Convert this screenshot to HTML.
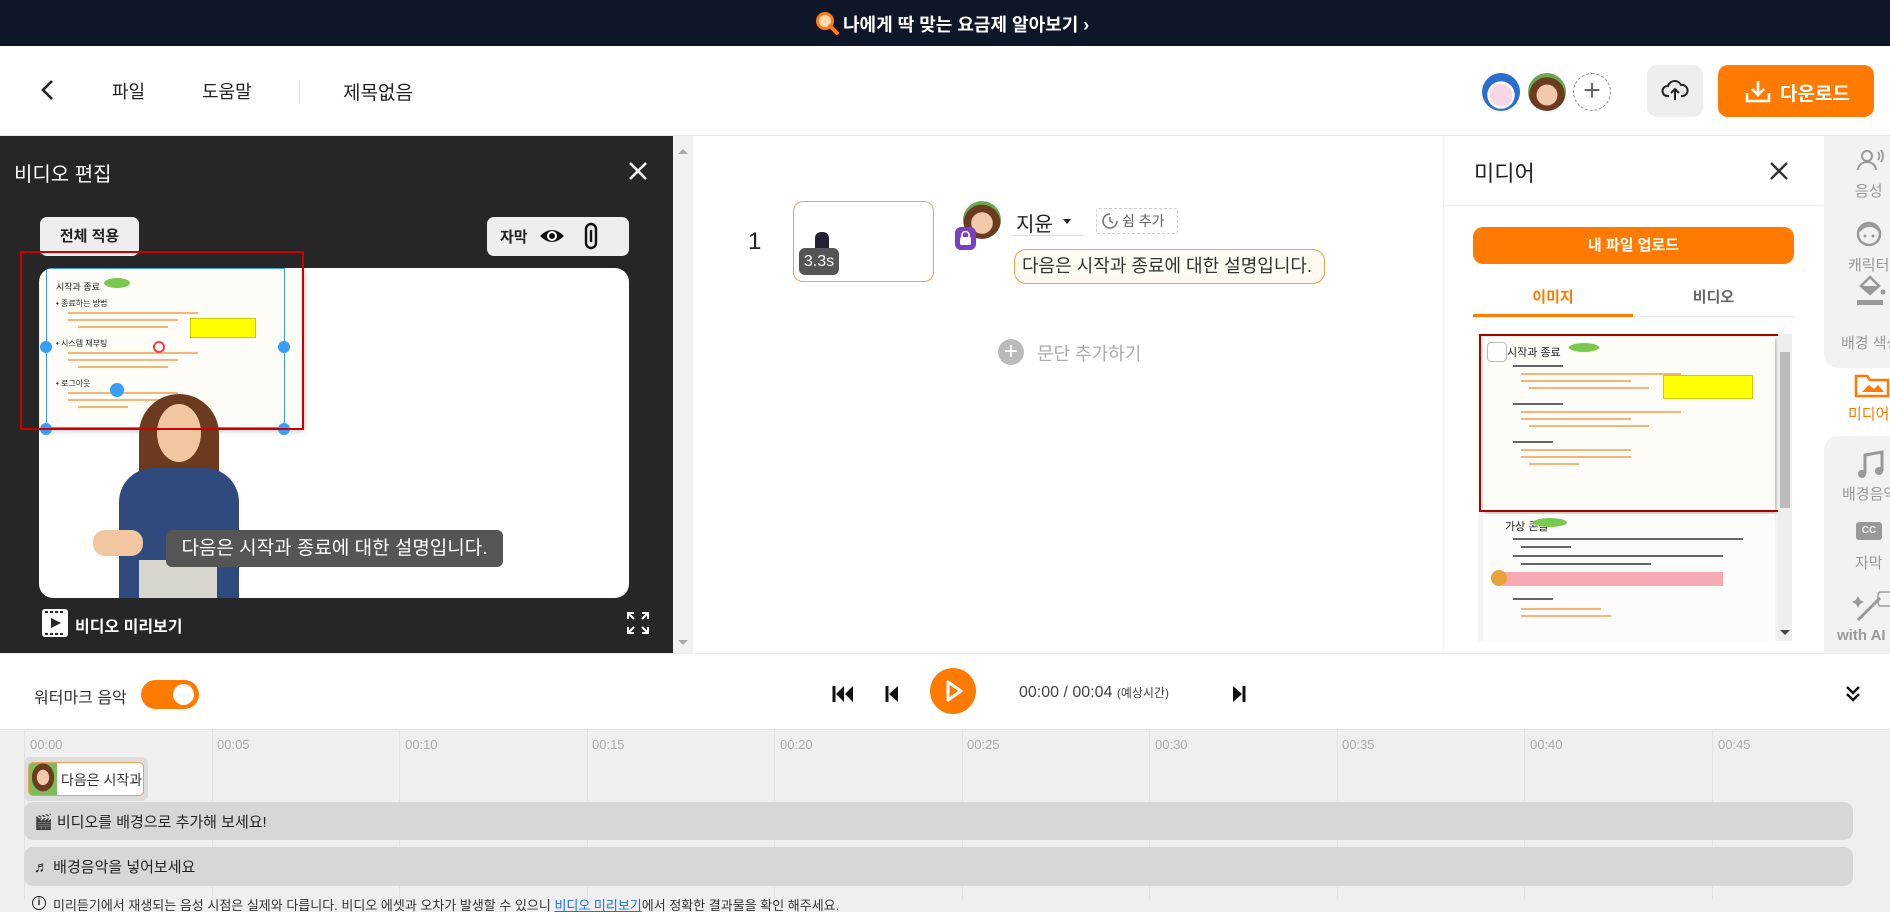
<!DOCTYPE html>
<html><head><meta charset="utf-8"><style>
*{box-sizing:border-box;margin:0;padding:0}
body{width:1890px;height:912px;position:relative;overflow:hidden;background:#fff;font-family:"Liberation Sans","Noto Sans CJK KR",sans-serif;color:#222}
.a{position:absolute}
.t{white-space:nowrap}
.ln{position:absolute;height:2px;background:#f3a25a;opacity:.8}
.lk{position:absolute;height:2px;background:#666}
</style></head><body>
<!-- banner -->
<div class="a" style="left:0;top:0;width:1890px;height:46px;background:#0e1628"></div>
<svg class="a" style="left:815px;top:11px" width="24" height="24"><circle cx="10" cy="10" r="7.5" fill="#ffd9b0" stroke="#ff7a1a" stroke-width="3"/><path d="M15 15 L22 22" stroke="#ff7a1a" stroke-width="4" stroke-linecap="round"/></svg>
<div class="a t" style="left:843px;top:11px;color:#fff;font-size:18px;font-weight:bold">나에게 딱 맞는 요금제 알아보기 ›</div>
<!-- header -->
<div class="a" style="left:0;top:135px;width:1890px;height:1px;background:#e6e6e6"></div>
<svg class="a" style="left:40px;top:79px" width="16" height="22"><path d="M12 2 L3 11 L12 20" stroke="#222" stroke-width="2.6" fill="none"/></svg>
<div class="a t" style="left:112px;top:78px;font-size:18px">파일</div>
<div class="a t" style="left:202px;top:78px;font-size:18px">도움말</div>
<div class="a" style="left:299px;top:80px;width:1px;height:24px;background:#ddd"></div>
<div class="a t" style="left:343px;top:78px;font-size:19px">제목없음</div>
<div class="a" style="left:1482px;top:73px;width:38px;height:38px;border-radius:50%;background:radial-gradient(circle at 50% 58%,#f7d6e6 0 38%,#ffffff 40% 46%,#2a6fd0 48%)"></div>
<div class="a" style="left:1528px;top:73px;width:38px;height:38px;border-radius:50%;background:radial-gradient(circle at 50% 58%,#f2c9a8 0 35%,#6b3b20 37% 60%,#6aa84f 62%)"></div>
<div class="a" style="left:1573px;top:73px;width:38px;height:38px;border-radius:50%;border:1px dashed #888;text-align:center;line-height:34px;font-size:30px;color:#666">+</div>
<div class="a" style="left:1647px;top:65px;width:56px;height:52px;border-radius:10px;background:#eee"></div>
<svg class="a" style="left:1661px;top:76px" width="28" height="28"><path d="M8 20 H6 A5 5 0 0 1 7 10 A7 7 0 0 1 20 9 A5 5 0 0 1 22 20 H20" stroke="#222" stroke-width="2" fill="none"/><path d="M14 24 V13 M10 17 L14 13 L18 17" stroke="#222" stroke-width="2" fill="none"/></svg>
<div class="a" style="left:1718px;top:65px;width:156px;height:52px;border-radius:10px;background:#ff7a00"></div>
<svg class="a" style="left:1744px;top:78px" width="28" height="26"><path d="M3 15 V23 H25 V15 M14 3 V17 M8 11 L14 17 L20 11" stroke="#fff" stroke-width="2.6" fill="none"/></svg>
<div class="a t" style="left:1780px;top:79px;font-size:19px;font-weight:bold;color:#fff">다운로드</div>
<!-- left panel -->
<div class="a" style="left:0;top:136px;width:673px;height:517px;background:#262626"></div>
<div class="a t" style="left:14px;top:158px;font-size:20px;color:#fff">비디오 편집</div>
<svg class="a" style="left:628px;top:161px" width="20" height="20"><path d="M2 2 L18 18 M18 2 L2 18" stroke="#fff" stroke-width="2.6"/></svg>
<div class="a t" style="left:40px;top:217px;width:99px;height:39px;border-radius:7px;background:#eee;text-align:center;line-height:39px;font-size:15px;font-weight:bold">전체 적용</div>
<div class="a" style="left:487px;top:217px;width:142px;height:39px;border-radius:7px;background:#eee"></div>
<div class="a t" style="left:500px;top:226px;font-size:15px;font-weight:bold">자막</div>
<svg class="a" style="left:538px;top:226px" width="28" height="20"><path d="M2 10 Q14 -2 26 10 Q14 22 2 10Z" fill="#111"/><circle cx="14" cy="10" r="5" fill="#fff"/><circle cx="14" cy="10" r="3" fill="#111"/></svg>
<svg class="a" style="left:584px;top:222px" width="14" height="28"><rect x="2" y="2" width="10" height="24" rx="5" stroke="#111" stroke-width="2.4" fill="none"/><path d="M7 8 V20" stroke="#111" stroke-width="2.4"/></svg>
<div class="a" style="left:39px;top:268px;width:590px;height:330px;border-radius:14px;background:#fff;overflow:hidden">
 <div class="a" style="left:1px;top:0;width:262px;height:160px;background:#fdfcf6;box-shadow:2px 2px 6px rgba(0,0,0,.3)">
  <div class="a t" style="left:16px;top:12px;font-size:9px">시작과 종료</div>
  <div class="a" style="left:64px;top:10px;width:26px;height:10px;border-radius:50%;background:#79c94e"></div>
  <div class="a t" style="left:16px;top:30px;font-size:8px">• 종료하는 방법</div>
  <div class="ln" style="left:28px;top:44px;width:130px"></div><div class="ln" style="left:28px;top:51px;width:110px"></div><div class="ln" style="left:38px;top:58px;width:90px"></div>
  <div class="a" style="left:150px;top:50px;width:66px;height:20px;background:#ffff00;border:1px solid #cc0"></div>
  <div class="a t" style="left:16px;top:70px;font-size:8px">• 시스템 재부팅</div>
  <div class="ln" style="left:28px;top:84px;width:130px"></div><div class="ln" style="left:28px;top:91px;width:110px"></div><div class="ln" style="left:38px;top:98px;width:90px"></div>
  <div class="a t" style="left:16px;top:110px;font-size:8px">• 로그아웃</div>
  <div class="ln" style="left:28px;top:124px;width:110px"></div><div class="ln" style="left:28px;top:131px;width:100px"></div><div class="ln" style="left:38px;top:138px;width:50px"></div>
 </div>
 <div class="a" style="left:7px;top:0;width:239px;height:160px;border:1px solid #3a9df5"></div>
 <div class="a" style="left:1px;top:155px;width:12px;height:12px;border-radius:50%;background:#3a9df5"></div>
 <div class="a" style="left:239px;top:155px;width:12px;height:12px;border-radius:50%;background:#3a9df5"></div>
 <div class="a" style="left:239px;top:73px;width:12px;height:12px;border-radius:50%;background:#3a9df5"></div>
 <div class="a" style="left:1px;top:73px;width:12px;height:12px;border-radius:50%;background:#3a9df5"></div>
 <div class="a" style="left:114px;top:73px;width:12px;height:12px;border-radius:50%;border:2px solid #e44"></div>
 <!-- character -->
 <div class="a" style="left:100px;top:126px;width:80px;height:130px;border-radius:40px 40px 12px 12px;background:#6b3a1f"></div>
 <div class="a" style="left:118px;top:136px;width:44px;height:58px;border-radius:50%;background:#f2c6a0"></div>
 <div class="a" style="left:80px;top:200px;width:120px;height:130px;border-radius:34px 34px 0 0;background:#2f4b7e"></div>
 <div class="a" style="left:54px;top:262px;width:50px;height:26px;border-radius:12px;background:#f2c6a0"></div>
 <div class="a" style="left:100px;top:292px;width:78px;height:40px;background:#d9d6cf"></div>
</div>
<div class="a" style="left:20px;top:251px;width:284px;height:179px;border:2px solid #c00"></div>
<div class="a" style="left:110px;top:383px;width:14px;height:14px;border-radius:50%;background:#3a9df5"></div>
<div class="a t" style="left:166px;top:530px;width:337px;height:37px;border-radius:6px;background:#555;color:#fff;font-size:19px;line-height:37px;text-align:center">다음은 시작과 종료에 대한 설명입니다.</div>
<svg class="a" style="left:42px;top:609px" width="26" height="28"><rect x="0" y="0" width="26" height="28" rx="3" fill="#fff"/><path d="M3 3 H23 M3 25 H23" stroke="#262626" stroke-width="2" stroke-dasharray="3 2"/><path d="M9 9 L19 14 L9 19Z" fill="#262626"/></svg>
<div class="a t" style="left:75px;top:613px;font-size:16px;font-weight:bold;color:#fff">비디오 미리보기</div>
<svg class="a" style="left:626px;top:611px" width="24" height="24"><path d="M2 8 V2 H8 M2 2 L8 8 M22 8 V2 H16 M22 2 L16 8 M2 16 V22 H8 M2 22 L8 16 M22 16 V22 H16 M22 22 L16 16" stroke="#fff" stroke-width="2" fill="none"/></svg>
<!-- scrollbar column -->
<div class="a" style="left:673px;top:136px;width:20px;height:517px;background:#f1f1f1"></div>
<div class="a" style="left:678px;top:144px;width:0;height:0;border:5px solid transparent;border-bottom-color:#aaa"></div>
<div class="a" style="left:678px;top:640px;width:0;height:0;border:5px solid transparent;border-top-color:#aaa"></div>
<!-- middle -->
<div class="a t" style="left:748px;top:228px;font-size:24px">1</div>
<div class="a" style="left:793px;top:201px;width:141px;height:81px;border:1.5px solid #f0a050;border-radius:10px;background:#fff"></div>
<div class="a" style="left:815px;top:232px;width:14px;height:40px;background:#223;border-radius:6px 6px 0 0"></div>
<div class="a t" style="left:799px;top:248px;width:40px;height:27px;border-radius:6px;background:#555;color:#fff;font-size:16px;line-height:27px;text-align:center">3.3s</div>
<div class="a" style="left:963px;top:201px;width:38px;height:38px;border-radius:50%;background:radial-gradient(circle at 50% 58%,#f2c9a8 0 36%,#6b3b20 38% 62%,#6aa84f 64%)"></div>
<div class="a" style="left:955px;top:227px;width:21px;height:23px;border-radius:6px;background:#7b3fc4"></div>
<svg class="a" style="left:959px;top:230px" width="13" height="16"><path d="M3 7 V5 A3.5 3.5 0 0 1 10 5 V7" stroke="#fff" stroke-width="1.6" fill="none"/><rect x="1" y="7" width="11" height="8" rx="1.5" fill="#fff"/></svg>
<div class="a t" style="left:1016px;top:208px;font-size:20px">지윤</div>
<div class="a" style="left:1063px;top:219px;border:4px solid transparent;border-top:5px solid #222"></div>
<div class="a" style="left:1013px;top:235px;width:70px;height:1px;background:#ddd"></div>
<div class="a" style="left:1096px;top:208px;width:82px;height:26px;border:1px dashed #ccc;border-radius:3px"></div>
<svg class="a" style="left:1101px;top:212px" width="18" height="18"><path d="M9 2 A7 7 0 1 0 16 9" stroke="#777" stroke-width="1.6" fill="none"/><path d="M9 5 V9 L12 11" stroke="#777" stroke-width="1.5" fill="none"/></svg>
<div class="a t" style="left:1122px;top:211px;font-size:14px;color:#666">쉼 추가</div>
<div class="a t" style="left:1014px;top:249px;width:311px;height:35px;border:1.5px solid #f0a050;border-radius:12px;background:#fffaf2;font-size:18px;line-height:32px;padding-left:7px;color:#333">다음은 시작과 종료에 대한 설명입니다.</div>
<div class="a" style="left:998px;top:339px;width:26px;height:26px;border-radius:50%;background:#bbb;color:#fff;text-align:center;line-height:25px;font-size:24px">+</div>
<div class="a t" style="left:1037px;top:340px;font-size:18px;color:#aaa">문단 추가하기</div>
<!-- media panel -->
<div class="a" style="left:1443px;top:136px;width:1px;height:517px;background:#eee"></div>
<div class="a t" style="left:1474px;top:156px;font-size:22px">미디어</div>
<svg class="a" style="left:1769px;top:161px" width="20" height="20"><path d="M2 2 L18 18 M18 2 L2 18" stroke="#333" stroke-width="2.4"/></svg>
<div class="a" style="left:1444px;top:205px;width:379px;height:1px;background:#eee"></div>
<div class="a t" style="left:1473px;top:227px;width:321px;height:37px;border-radius:10px;background:#ff7a00;color:#fff;font-weight:bold;font-size:15px;text-align:center;line-height:37px">내 파일 업로드</div>
<div class="a t" style="left:1473px;top:286px;width:160px;text-align:center;font-size:15px;font-weight:bold;color:#ff7a00">이미지</div>
<div class="a t" style="left:1633px;top:286px;width:161px;text-align:center;font-size:15px;font-weight:bold;color:#666">비디오</div>
<div class="a" style="left:1473px;top:316px;width:321px;height:1px;background:#e8e8e8"></div>
<div class="a" style="left:1473px;top:314px;width:160px;height:3px;background:#ff7a00"></div>
<div class="a" style="left:1478px;top:334px;width:314px;height:307px;background:#f4f4f4"></div>
<div class="a" style="left:1483px;top:337px;width:292px;height:174px;background:#fdfcf6;box-shadow:1px 2px 4px rgba(0,0,0,.3)">
 <div class="a" style="left:4px;top:5px;width:20px;height:20px;border:1px solid #bbb;border-radius:4px;background:#fff"></div>
 <div class="a t" style="left:24px;top:7px;font-size:11px">시작과 종료</div>
 <div class="a" style="left:86px;top:6px;width:30px;height:9px;border-radius:50%;background:#79c94e"></div>
 <div class="lk" style="left:30px;top:28px;width:50px"></div>
 <div class="ln" style="left:38px;top:36px;width:160px"></div><div class="ln" style="left:38px;top:43px;width:110px"></div><div class="ln" style="left:46px;top:50px;width:120px"></div>
 <div class="a" style="left:180px;top:38px;width:90px;height:24px;background:#ffff00;border:1px solid #cc0"></div>
 <div class="lk" style="left:30px;top:66px;width:50px"></div>
 <div class="ln" style="left:38px;top:74px;width:160px"></div><div class="ln" style="left:38px;top:81px;width:110px"></div><div class="ln" style="left:46px;top:88px;width:120px"></div>
 <div class="lk" style="left:30px;top:104px;width:40px"></div>
 <div class="ln" style="left:38px;top:112px;width:110px"></div><div class="ln" style="left:38px;top:119px;width:110px"></div><div class="ln" style="left:46px;top:126px;width:50px"></div>
</div>
<div class="a" style="left:1483px;top:514px;width:292px;height:127px;background:#fdfcfa">
 <div class="a t" style="left:22px;top:4px;font-size:11px">가상 콘솔</div>
 <div class="a" style="left:50px;top:4px;width:34px;height:9px;border-radius:50%;background:#79c94e"></div>
 <div class="lk" style="left:30px;top:24px;width:230px;height:1.5px"></div><div class="lk" style="left:38px;top:32px;width:50px;height:1.5px"></div>
 <div class="lk" style="left:30px;top:41px;width:210px;height:1.5px"></div><div class="lk" style="left:38px;top:49px;width:130px;height:1.5px"></div>
 <div class="a" style="left:20px;top:58px;width:220px;height:14px;background:#f7a9b4"></div>
 <div class="a" style="left:8px;top:56px;width:16px;height:16px;border-radius:50%;background:#e8a23a"></div>
 <div class="lk" style="left:30px;top:84px;width:40px;height:1.5px"></div>
 <div class="ln" style="left:38px;top:94px;width:80px"></div><div class="ln" style="left:38px;top:101px;width:90px"></div>
</div>
<div class="a" style="left:1479px;top:334px;width:306px;height:178px;border:2px solid #a00"></div>
<div class="a" style="left:1778px;top:334px;width:14px;height:307px;background:#eee"></div>
<div class="a" style="left:1780px;top:352px;width:10px;height:156px;background:#bbb"></div>
<div class="a" style="left:1780px;top:630px;border:5px solid transparent;border-top:5px solid #444"></div>
<!-- right sidebar -->
<div class="a" style="left:1823px;top:136px;width:67px;height:517px;background:#fff"></div>
<div class="a" style="left:1824px;top:136px;width:70px;height:232px;border-radius:0 0 0 14px;background:#f2f2f2"></div>
<div class="a" style="left:1824px;top:436px;width:70px;height:217px;border-radius:14px 0 0 0;background:#f2f2f2"></div>
<svg class="a" style="left:1856px;top:148px" width="30" height="24"><circle cx="11" cy="8" r="5" stroke="#999" stroke-width="2" fill="none"/><path d="M2 22 A9 8 0 0 1 20 22" stroke="#999" stroke-width="2" fill="none"/><path d="M22 4 Q25 8 22 12 M25 2 Q29 8 25 14" stroke="#999" stroke-width="1.8" fill="none"/></svg>
<div class="a t" style="left:1855px;top:180px;font-size:15px;color:#999">음성</div>
<svg class="a" style="left:1855px;top:220px" width="30" height="28"><circle cx="14" cy="14" r="11" stroke="#999" stroke-width="2.5" fill="none"/><path d="M4 11 Q10 4 18 6 Q22 8 25 11" stroke="#999" stroke-width="2.5" fill="none"/><circle cx="10" cy="16" r="1.5" fill="#999"/><circle cx="18" cy="16" r="1.5" fill="#999"/></svg>
<div class="a t" style="left:1848px;top:254px;font-size:15px;color:#999">캐릭터</div>
<div class="a" style="left:1857px;top:300px;width:26px;height:5px;background:#999"></div>
<svg class="a" style="left:1857px;top:272px" width="30" height="26"><path d="M4 14 L13 5 L22 14 L13 22Z" stroke="#999" stroke-width="2.5" fill="none"/><path d="M4 14 L22 14 L13 22Z" fill="#999"/><circle cx="26" cy="20" r="2.5" fill="#999"/></svg>
<div class="a t" style="left:1841px;top:332px;font-size:15px;color:#999">배경 색상</div>
<svg class="a" style="left:1852px;top:370px" width="38" height="30"><path d="M4 6 V26 H36 V10 H18 L15 6Z" stroke="#ff7a00" stroke-width="2.6" fill="none"/><path d="M10 22 L17 15 L22 19 L26 15 L32 22Z" fill="#ff7a00"/></svg>
<div class="a t" style="left:1848px;top:403px;font-size:15px;color:#ff7a00">미디어</div>
<svg class="a" style="left:1856px;top:450px" width="30" height="30"><path d="M9 24 V5 L26 2 V21" stroke="#999" stroke-width="3" fill="none"/><circle cx="6" cy="24" r="4" fill="#999"/><circle cx="23" cy="21" r="4" fill="#999"/></svg>
<div class="a t" style="left:1842px;top:483px;font-size:15px;color:#999">배경음악</div>
<div class="a" style="left:1856px;top:522px;width:26px;height:18px;border-radius:3px;background:#999;color:#f2f2f2;font-size:10px;font-weight:bold;text-align:center;line-height:18px">CC</div>
<div class="a t" style="left:1855px;top:552px;font-size:15px;color:#999">자막</div>
<svg class="a" style="left:1852px;top:590px" width="40" height="34"><path d="M6 30 L28 8" stroke="#999" stroke-width="3"/><path d="M6 6 L8 10 L12 12 L8 14 L6 18 L4 14 L0 12 L4 10Z" fill="#999"/><rect x="26" y="2" width="18" height="14" rx="3" stroke="#999" fill="none" stroke-width="1.5"/></svg>
<div class="a t" style="left:1837px;top:627px;font-size:15px;font-weight:bold;color:#999">with AI</div>
<!-- controls -->
<div class="a" style="left:0;top:653px;width:1890px;height:76px;background:#fff;border-top:1px solid #eee;box-shadow:0 2px 3px rgba(0,0,0,.08)"></div>
<div class="a t" style="left:34px;top:684px;font-size:16px;color:#333">워터마크 음악</div>
<div class="a" style="left:141px;top:680px;width:58px;height:29px;border-radius:15px;background:#ff7a00"></div>
<div class="a" style="left:173px;top:684px;width:21px;height:21px;border-radius:50%;background:#fff"></div>
<svg class="a" style="left:832px;top:684px" width="24" height="20"><path d="M2 2 V18" stroke="#111" stroke-width="3"/><path d="M12 2 L4 10 L12 18Z M21 2 L13 10 L21 18Z" fill="#111"/></svg>
<svg class="a" style="left:884px;top:684px" width="16" height="20"><path d="M3 2 V18" stroke="#111" stroke-width="3"/><path d="M14 2 L5 10 L14 18Z" fill="#111"/></svg>
<div class="a" style="left:930px;top:668px;width:46px;height:46px;border-radius:50%;background:#ff7a00"></div>
<svg class="a" style="left:944px;top:679px" width="20" height="24"><path d="M4 3 L17 12 L4 21Z" stroke="#fff" stroke-width="3" fill="none" stroke-linejoin="round"/></svg>
<div class="a t" style="left:1019px;top:684px;font-size:16px;color:#444">00:00 / 00:04 <span style="font-size:12px">(예상시간)</span></div>
<svg class="a" style="left:1231px;top:684px" width="16" height="20"><path d="M2 2 L11 10 L2 18Z" fill="#111"/><path d="M13 2 V18" stroke="#111" stroke-width="3"/></svg>
<svg class="a" style="left:1845px;top:684px" width="16" height="20"><path d="M2 3 L8 9 L14 3 M2 10 L8 16 L14 10" stroke="#111" stroke-width="2.4" fill="none"/></svg>
<!-- timeline -->
<div class="a" style="left:0;top:729px;width:1890px;height:183px;background:#efefef"></div>
<div class="a" style="left:0;top:729px;width:1890px;height:1px;background:#e2e2e2"></div>
<div class="a" style="left:24px;top:729px;width:1px;height:170px;background:#e3e3e3"></div>
<div class="a" style="left:212px;top:729px;width:1px;height:170px;background:#e3e3e3"></div>
<div class="a" style="left:399px;top:729px;width:1px;height:170px;background:#e3e3e3"></div>
<div class="a" style="left:587px;top:729px;width:1px;height:170px;background:#e3e3e3"></div>
<div class="a" style="left:774px;top:729px;width:1px;height:170px;background:#e3e3e3"></div>
<div class="a" style="left:962px;top:729px;width:1px;height:170px;background:#e3e3e3"></div>
<div class="a" style="left:1149px;top:729px;width:1px;height:170px;background:#e3e3e3"></div>
<div class="a" style="left:1337px;top:729px;width:1px;height:170px;background:#e3e3e3"></div>
<div class="a" style="left:1524px;top:729px;width:1px;height:170px;background:#e3e3e3"></div>
<div class="a" style="left:1712px;top:729px;width:1px;height:170px;background:#e3e3e3"></div>
<div class="a t" style="left:30px;top:737px;font-size:13px;color:#aaa">00:00</div>
<div class="a t" style="left:217px;top:737px;font-size:13px;color:#aaa">00:05</div>
<div class="a t" style="left:405px;top:737px;font-size:13px;color:#aaa">00:10</div>
<div class="a t" style="left:592px;top:737px;font-size:13px;color:#aaa">00:15</div>
<div class="a t" style="left:780px;top:737px;font-size:13px;color:#aaa">00:20</div>
<div class="a t" style="left:967px;top:737px;font-size:13px;color:#aaa">00:25</div>
<div class="a t" style="left:1155px;top:737px;font-size:13px;color:#aaa">00:30</div>
<div class="a t" style="left:1342px;top:737px;font-size:13px;color:#aaa">00:35</div>
<div class="a t" style="left:1530px;top:737px;font-size:13px;color:#aaa">00:40</div>
<div class="a t" style="left:1718px;top:737px;font-size:13px;color:#aaa">00:45</div>
<div class="a" style="left:24px;top:757px;width:124px;height:44px;border-radius:6px;background:#ddd"></div>
<div class="a" style="left:28px;top:762px;width:116px;height:34px;border:1.5px solid #f0a050;border-radius:5px;background:#fff;overflow:hidden">
 <div class="a" style="left:0;top:0;width:28px;height:32px;background:radial-gradient(ellipse at 50% 45%,#f2c9a8 0 30%,#6b3b20 32% 55%,#7cbc5a 57%)"></div>
 <div class="a t" style="left:32px;top:7px;font-size:14px;color:#333">다음은 시작과</div>
</div>
<div class="a" style="left:24px;top:802px;width:1829px;height:38px;border-radius:9px;background:#d7d7d7"></div>
<div class="a t" style="left:34px;top:811px;font-size:15px;color:#222">🎬 비디오를 배경으로 추가해 보세요!</div>
<div class="a" style="left:24px;top:847px;width:1829px;height:39px;border-radius:9px;background:#d7d7d7"></div>
<div class="a t" style="left:34px;top:856px;font-size:15px;color:#222">♬ 배경음악을 넣어보세요</div>
<div class="a" style="left:32px;top:896px;width:14px;height:14px;border:1.5px solid #222;border-radius:50%;font-size:10px;text-align:center;line-height:11px;font-weight:bold">i</div>
<div class="a t" style="left:53px;top:895px;font-size:13px;color:#333">미리듣기에서 재생되는 음성 시점은 실제와 다릅니다. 비디오 에셋과 오차가 발생할 수 있으니 <span style="color:#1a73e8;text-decoration:underline">비디오 미리보기</span>에서 정확한 결과물을 확인 해주세요.</div>
</body></html>
